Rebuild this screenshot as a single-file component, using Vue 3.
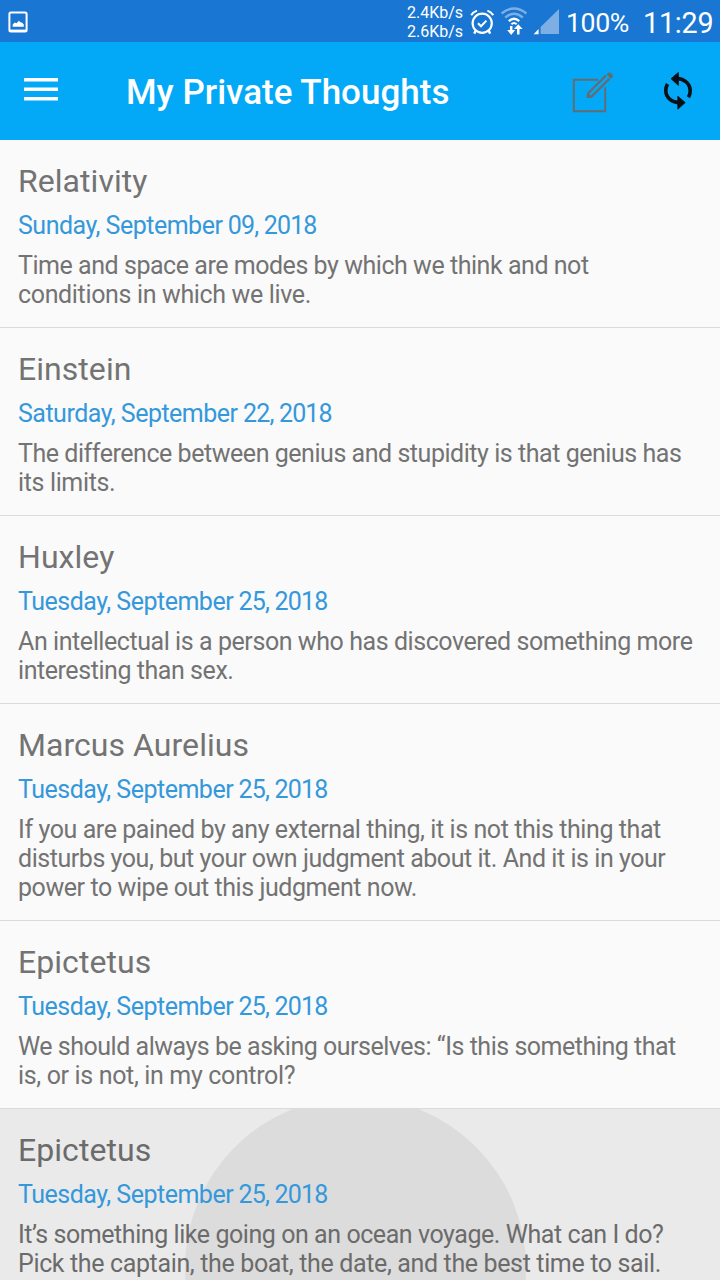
<script setup>
const tuesday = ['Tuesday, September', ' 25, 2018']
const thoughts = [
  {
    title: 'Relativity',
    date: ['Sunday, September', ' 09, 2018'],
    lines: [
      { text: 'Time and space are modes by which we think and not', tracking: -0.46 },
      { text: 'conditions in which we live.', tracking: -0.35 },
    ],
  },
  {
    title: 'Einstein',
    date: ['Saturday, September', ' 22, 2018'],
    lines: [
      { text: 'The difference between genius and stupidity is that genius has', tracking: -0.46 },
      { text: 'its limits.', tracking: -0.36 },
    ],
  },
  {
    title: 'Huxley',
    date: tuesday,
    lines: [
      { text: 'An intellectual is a person who has discovered something more', tracking: -0.43 },
      { text: 'interesting than sex.', tracking: -0.44 },
    ],
  },
  {
    title: 'Marcus Aurelius',
    date: tuesday,
    lines: [
      { text: 'If you are pained by any external thing, it is not this thing that', tracking: -0.42 },
      { text: 'disturbs you, but your own judgment about it. And it is in your', tracking: -0.45 },
      { text: 'power to wipe out this judgment now.', tracking: -0.43 },
    ],
  },
  {
    title: 'Epictetus',
    date: tuesday,
    lines: [
      { text: 'We should always be asking ourselves: “Is this something that', tracking: -0.48 },
      { text: 'is, or is not, in my control?', tracking: -0.35 },
    ],
  },
  {
    title: 'Epictetus',
    date: tuesday,
    pressed: true,
    lines: [
      { text: 'It’s something like going on an ocean voyage. What can I do?', tracking: -0.44 },
      { text: 'Pick the captain, the boat, the date, and the best time to sail.', tracking: -0.36 },
    ],
  },
]
</script>

<template>
  <div class="screen">
    <header class="status">
      <svg class="photo" width="20" height="22" viewBox="0 0 20 22">
        <rect x="1.4" y="1.4" width="17.2" height="19" rx="1.5" fill="none" stroke="#fff" stroke-width="2" />
        <path d="M1 18.6h18v1.8H1z" fill="#fff" />
        <path d="M4.7 15.8v-2.4l2-2 1.8.8 2.4-2.4 1.8 1.8 1.2-.2 1.9 2v2.4z" fill="#fff" />
      </svg>
      <div class="spacer"></div>
      <div class="speed"><span>2.4Kb/s</span><span>2.6Kb/s</span></div>
      <svg class="alarm" width="24" height="26" viewBox="0 0 24 26" fill="none" stroke="#fff">
        <circle cx="12.2" cy="14.2" r="9.6" stroke-width="2.2" />
        <path d="M8 14.2l3 3 5.4-5.6" stroke-width="2" />
        <path d="M1.2 6.2Q3 3 7 1.6M23.2 6.2Q21.4 3 17.4 1.6" stroke-width="2" />
        <path d="M5.8 21.6L4.2 24.6M18.6 21.6L20.2 24.6" stroke-width="2.4" />
      </svg>
      <svg class="wifi" width="28" height="30" viewBox="0 0 28 30" fill="none">
        <path d="M1.6 6.4Q14-3.4 26.4 6.4M5.2 10.6Q14 3 22.8 10.6" stroke="#7daee4" stroke-width="2.5" />
        <path d="M8.8 14.2Q14 9.4 19.2 14.2" stroke="#fff" stroke-width="2.3" />
        <path d="M11.4 17.2Q14 14.6 16.6 17.2" stroke="#fff" stroke-width="2" />
        <path d="M11.2 19v5.5M18.3 27.5v-6" stroke="#fff" stroke-width="2.5" />
        <path d="M7.2 22.9h8l-4 5zM14 22.1l4.3-4.8 4.3 4.8z" fill="#fff" />
      </svg>
      <svg class="signal" width="26" height="26" viewBox="0 0 26 26">
        <path d="M26 0v25H7.6V18z" fill="#7daee4" />
        <path d="M5.6 20v5.2H.6z" fill="#fff" />
      </svg>
      <span class="battery">100%</span>
      <span class="clock">11:29</span>
    </header>

    <nav class="toolbar">
      <svg class="menu" width="34" height="26" viewBox="0 0 34 26">
        <path d="M0 2.8h34M0 12.2h34M0 21.7h34" stroke="#fff" stroke-width="3.4" />
      </svg>
      <h1>My Private Thoughts</h1>
      <div class="spacer"></div>
      <svg class="edit" width="42" height="42" viewBox="0 0 42 42" fill="none" stroke="#646c70">
        <path d="M26.3 7.8H1.8v31.4h31.4V15.2" stroke-width="1.9" />
        <path d="M15.7 21.8L34 3.5M19.2 25L37.3 6.9" stroke-width="2.2" />
        <path d="M14.8 21.4h1.8l3.2 3.2v1.4h-5zM34.6 2.2q1.9-2.5 4-1.4 3.2 1.8 2 4.4l-2 1.7z" fill="#646c70" stroke="none" />
      </svg>
      <svg class="sync" width="30" height="40" viewBox="0 0 30 40" fill="none" stroke="#061016" stroke-width="3.6">
        <path d="M12 7.6C20.5 7 27.2 12.2 27.2 19.8q0 3.4-1.8 6.4" />
        <path d="M18 31.6C9.5 32.2 2.8 27 2.8 19.6q0-3.6 1.7-6.6" />
        <path d="M8 7.7L15.4 1.4v13zM22.2 31.6L14.8 25.2v13z" fill="#061016" stroke="#061016" stroke-width=".8" stroke-linejoin="round" />
      </svg>
    </nav>

    <main>
      <article v-for="(item, i) in thoughts" :key="i" :class="{ pressed: item.pressed }">
        <i v-if="item.pressed" class="ripple"></i>
        <h2>{{ item.title }}</h2>
        <time>{{ item.date[0] }}<span class="digits">{{ item.date[1] }}</span></time>
        <p>
          <span v-for="line in item.lines" :key="line.text" :style="{ letterSpacing: line.tracking + 'px' }">{{ line.text }}</span>
        </p>
      </article>
    </main>
  </div>
</template>

<style>
html, body { margin: 0; overflow: hidden; background: #fafafa; }
</style>

<style scoped>
.screen {
  width: 720px;
  height: 1280px;
  overflow: hidden;
  display: flex;
  flex-direction: column;
  background: #fafafa;
  color: #737373;
  font-family: Roboto, sans-serif;
}
svg { display: block; flex: none; }
.spacer { flex: 1; }
.status {
  flex: none;
  display: flex;
  align-items: flex-start;
  height: 42px;
  background: #1976d2;
  color: #fff;
  white-space: nowrap;
}
.photo { margin: 11px 0 0 8px; }
.speed {
  display: flex;
  flex-direction: column;
  width: 57px;
  margin-top: 3px;
  font-size: 16px;
  line-height: 19px;
}
.alarm { margin: 9px 0 0 6px; }
.wifi { margin: 7px 0 0 6px; }
.signal { margin: 9px 0 0 5px; }
.battery {
  width: 64px;
  margin: 8px 0 0 7px;
  font-size: 26.7px;
  line-height: 30px;
  letter-spacing: -0.4px;
}
.clock {
  width: 71px;
  margin: 6px 6px 0 13px;
  font-size: 28.7px;
  line-height: 34px;
  letter-spacing: -0.2px;
}
.toolbar {
  flex: none;
  display: flex;
  align-items: flex-start;
  height: 98px;
  background: #03a9f7;
}
.menu { margin: 35px 0 0 24px; }
h1 {
  margin: 30px 0 0 68px;
  color: #fff;
  font-size: 35px;
  line-height: 42px;
  font-weight: 500;
  white-space: nowrap;
}
.edit { margin: 30px 49px 0 0; }
.sync { margin: 29px 27px 0 0; }
main { display: flex; flex-direction: column; }
article {
  position: relative;
  flex: none;
  display: flex;
  flex-direction: column;
  padding: 22px 18px 18px;
  border-bottom: 1px solid #dadada;
  overflow: hidden;
  white-space: nowrap;
}
h2 {
  margin: 0;
  position: relative;
  font-size: 32px;
  line-height: 38px;
  font-weight: 400;
  letter-spacing: 0.05px;
}
time, p {
  position: relative;
  font-size: 25px;
  line-height: 29px;
  letter-spacing: -0.5px;
}
time { margin-top: 11px; color: #3498db; white-space: pre; }
.digits { letter-spacing: -0.82px; }
p {
  display: flex;
  flex-direction: column;
  margin: 11px 0 0;
}
.pressed { background: #eaeaea; color: #6b6b6b; }
.ripple {
  position: absolute;
  left: 184.5px;
  top: -12px;
  width: 341.5px;
  height: 341.5px;
  border-radius: 50%;
  background: #dcdcdc;
}
</style>
